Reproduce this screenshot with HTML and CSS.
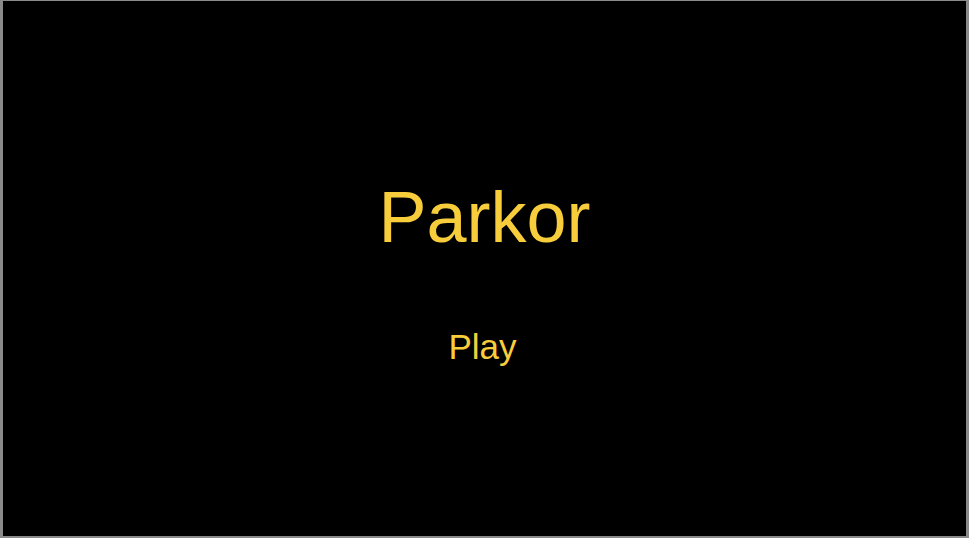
FILE: index.html
```html
<!DOCTYPE html>
<html>
<head>
<meta charset="utf-8">
<link rel="stylesheet" href="styles.css">
</head>
<body>
<div class="screen">
  <h1 class="title">Parkor</h1>
  <div class="play">Play</div>
</div>
</body>
</html>
```
FILE: styles.css
```css
html, body {
  margin: 0;
  padding: 0;
  width: 969px;
  height: 538px;
  background: #8a8a8a;
  overflow: hidden;
}
body {
  padding: 1px 3px 2px 3px;
  box-sizing: border-box;
}
.screen {
  width: 100%;
  height: 100%;
  background: #000;
  display: flex;
  flex-direction: column;
  align-items: center;
  font-family: "Liberation Sans", Arial, sans-serif;
  color: #f7cd3c;
}
.title {
  margin: 175px 0 0 0;
  font-size: 72px;
  font-weight: normal;
  line-height: 82px;
}
.play {
  margin: 69px 4px 0 0;
  font-size: 35px;
  line-height: 40px;
}
```
